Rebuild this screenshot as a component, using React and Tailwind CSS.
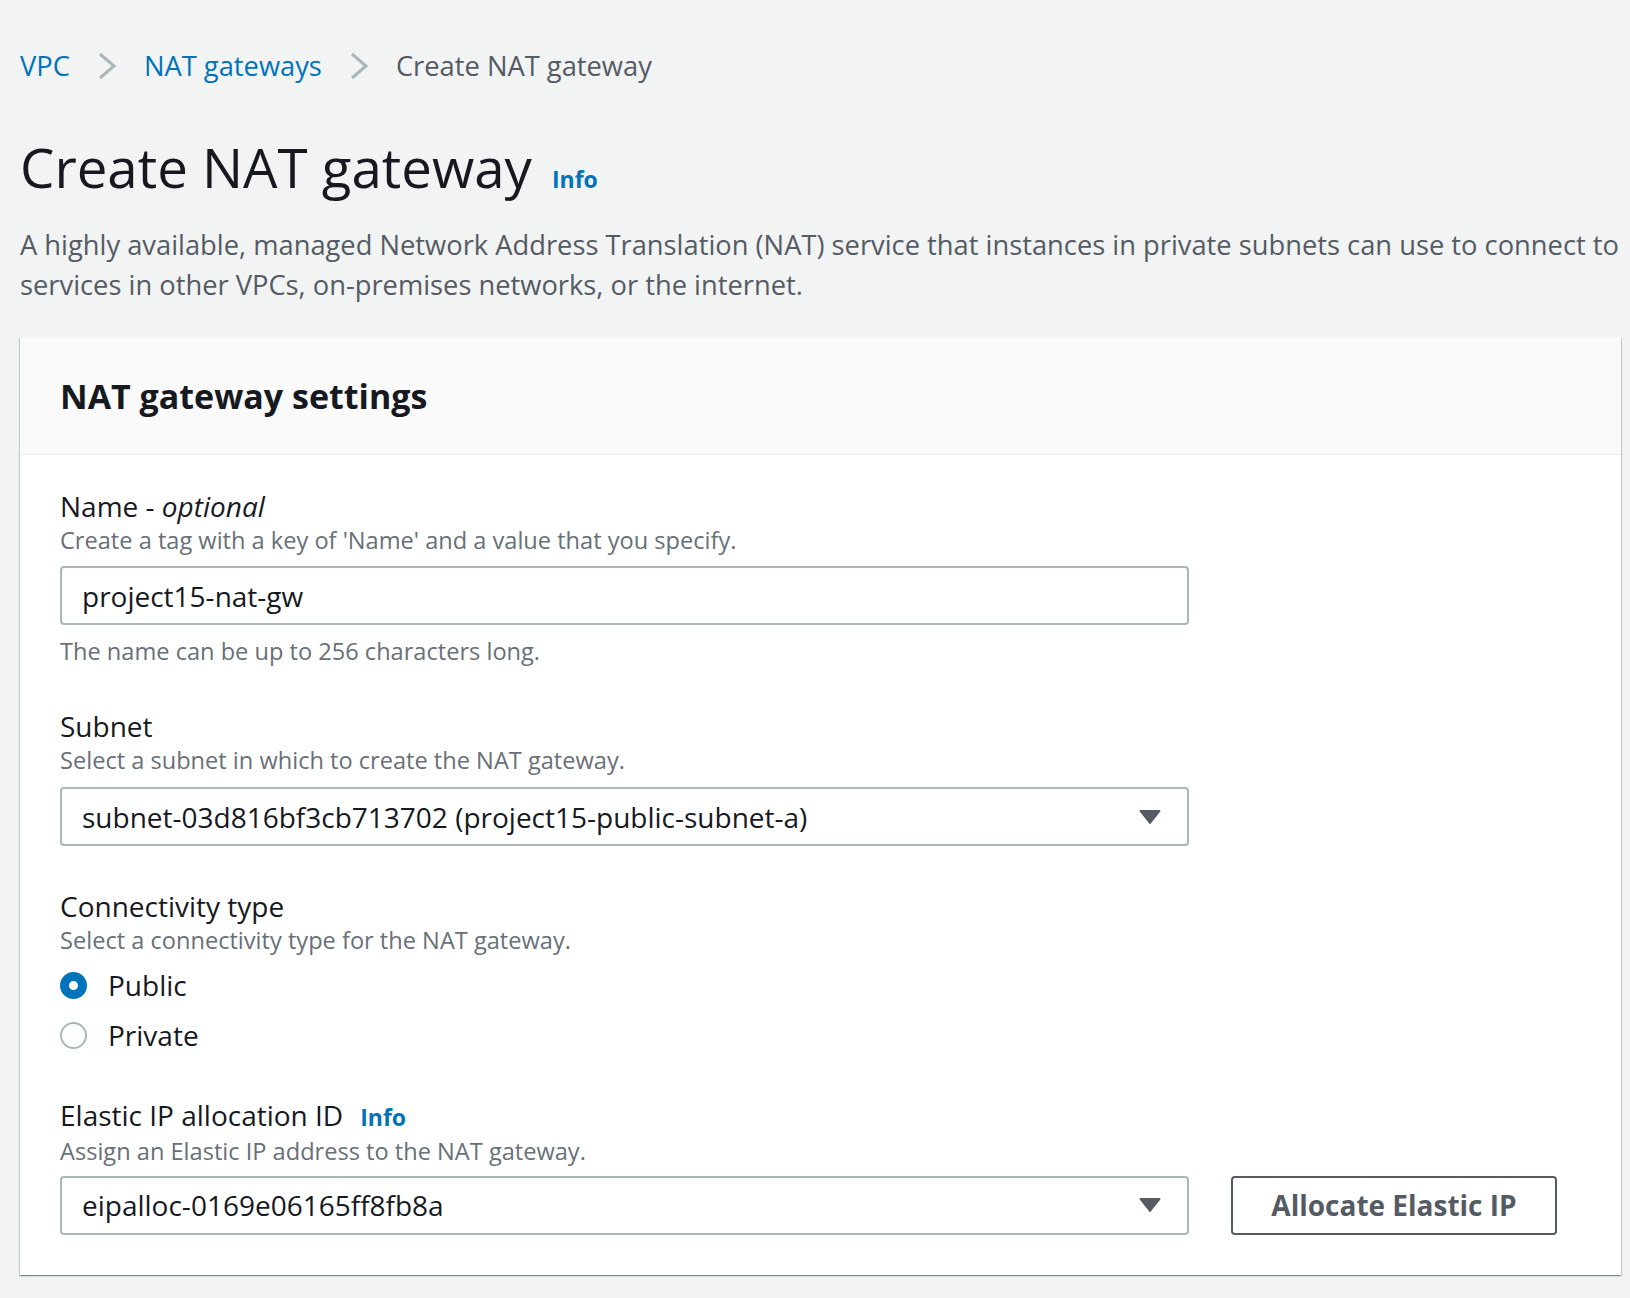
import React from 'react';

const Chevron = () => (
  <svg width="20" height="28" viewBox="0 0 20 28" className="mx-[27px]">
    <polyline points="3,2 17,14 3,26" fill="none" stroke="#aab7b8" strokeWidth="3" />
  </svg>
);

const Caret = () => (
  <svg width="22" height="14" viewBox="0 0 22 14">
    <path d="M1.5 1 H20.5 L11 13 Z" fill="#545b64" stroke="#545b64" strokeWidth="2" strokeLinejoin="round" />
  </svg>
);

const Label = ({ children }) => (
  <div className="text-[28px] leading-[36px] text-[#16191f]">{children}</div>
);

const Hint = ({ children }) => (
  <div className="text-[23.6px] leading-[32px] text-[#687078]">{children}</div>
);

const Select = ({ value }) => (
  <div className="w-[1129px] h-[59px] border-2 border-[#aab7b8] rounded-[4px] bg-white flex items-center justify-between pl-[20px] pr-[26px]">
    <span className="text-[28px] text-[#16191f]">{value}</span>
    <Caret />
  </div>
);

const Radio = ({ checked, label }) => (
  <div className="h-[50px] flex items-center">
    {checked ? (
      <span className="w-[27px] h-[27px] rounded-full border-[9px] border-[#0073bb] bg-white" />
    ) : (
      <span className="w-[27px] h-[27px] rounded-full border-2 border-[#aab7b8] bg-white" />
    )}
    <span className="ml-[21px] text-[28px] text-[#16191f]">{label}</span>
  </div>
);

export default function App() {
  return (
    <div className="min-h-screen bg-[#f2f3f3] pl-[20px] pt-[46px]" style={{ fontFamily: '"Open Sans", sans-serif' }}>
      <nav className="flex items-center h-[40px] text-[27.3px]">
        <span className="text-[#0073bb]">VPC</span>
        <Chevron />
        <span className="text-[#0073bb]">NAT gateways</span>
        <Chevron />
        <span className="text-[#545b64]">Create NAT gateway</span>
      </nav>

      <div className="mt-[49px] flex items-baseline h-[64px]">
        <h1 className="text-[54.6px] leading-[64px] text-[#16191f]">Create NAT gateway</h1>
        <span className="ml-[20px] text-[23px] font-bold text-[#0073bb]">Info</span>
      </div>

      <p className="mt-[26px] w-[1608px] text-[27.3px] leading-[40px] text-[#545b64]">
        A highly available, managed Network Address Translation (NAT) service that instances in private subnets can use to connect to
        <br />
        services in other VPCs, on-premises networks, or the internet.
      </p>

      <div className="mt-[32px] w-[1601px] bg-white shadow-[0_1px_1px_0_rgba(0,28,36,0.3),1px_1px_1px_0_rgba(0,28,36,0.15),-1px_1px_1px_0_rgba(0,28,36,0.15)]">
        <div className="bg-[#fafafa] border-b border-[#eaeded] px-[40px] pt-[39px] pb-[38px]">
          <h2 className="text-[34px] leading-[40px] font-bold text-[#16191f]">NAT gateway settings</h2>
        </div>

        <div className="px-[40px] pt-[33px] pb-[40px]">
          <Label>
            Name - <i>optional</i>
          </Label>
          <Hint>Create a tag with a key of 'Name' and a value that you specify.</Hint>
          <div className="mt-[10px] w-[1129px] h-[59px] border-2 border-[#aab7b8] rounded-[4px] flex items-center pl-[20px]">
            <span className="text-[28px] text-[#16191f]">project15-nat-gw</span>
          </div>
          <div className="mt-[10px]">
            <Hint>The name can be up to 256 characters long.</Hint>
          </div>

          <div className="mt-[41px]">
            <Label>Subnet</Label>
            <Hint>Select a subnet in which to create the NAT gateway.</Hint>
            <div className="mt-[11px]">
              <Select value="subnet-03d816bf3cb713702 (project15-public-subnet-a)" />
            </div>
          </div>

          <div className="mt-[42px]">
            <Label>Connectivity type</Label>
            <Hint>Select a connectivity type for the NAT gateway.</Hint>
            <div className="mt-[4px]">
              <Radio checked label="Public" />
              <Radio label="Private" />
            </div>
          </div>

          <div className="mt-[37px]">
            <div className="flex items-baseline">
              <Label>Elastic IP allocation ID</Label>
              <span className="ml-[17px] text-[23px] font-bold text-[#0073bb]">Info</span>
            </div>
            <Hint>Assign an Elastic IP address to the NAT gateway.</Hint>
            <div className="mt-[9px] flex items-center gap-[42px]">
              <Select value="eipalloc-0169e06165ff8fb8a" />
              <button className="w-[326px] h-[59px] border-2 border-[#545b64] rounded-[4px] bg-white text-[28px] font-bold text-[#545b64]">
                Allocate Elastic IP
              </button>
            </div>
          </div>
        </div>
      </div>
    </div>
  );
}
